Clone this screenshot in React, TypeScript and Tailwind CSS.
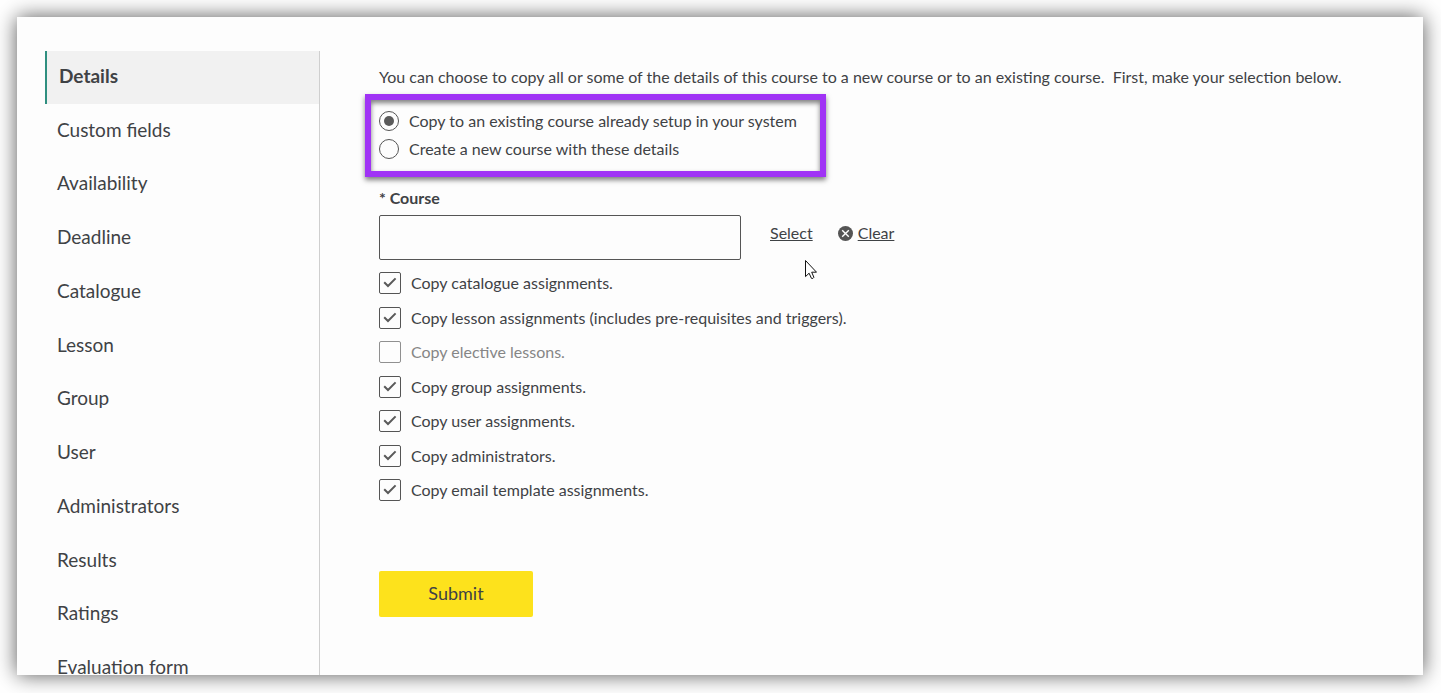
import { useState } from "react";

const MENU = [
    "Details",
    "Custom fields",
    "Availability",
    "Deadline",
    "Catalogue",
    "Lesson",
    "Group",
    "User",
    "Administrators",
    "Results",
    "Ratings",
    "Evaluation form",
];

const OPTIONS = [
    { id: "catalogue", label: "Copy catalogue assignments.", checked: true },
    { id: "lesson", label: "Copy lesson assignments (includes pre-requisites and triggers).", checked: true },
    { id: "elective", label: "Copy elective lessons.", checked: false, disabled: true },
    { id: "group", label: "Copy group assignments.", checked: true },
    { id: "user", label: "Copy user assignments.", checked: true },
    { id: "admins", label: "Copy administrators.", checked: true },
    { id: "email", label: "Copy email template assignments.", checked: true },
];

function SideMenu() {
    return (
        <nav className="w-[275px] shrink-0 border-r border-[#cfcfcf] text-[19px] leading-6">
            <ul className="flex h-[645px] flex-col">
                {MENU.map((item, i) => (
                    <li key={item} className="flex-1">
                        <a
                            href="#"
                            className={
                                i === 0
                                    ? "flex h-[53px] items-center border-l-2 border-[#2f8f80] bg-[#f1f1f1] pb-1 pl-3 font-bold"
                                    : "flex h-full items-center pb-1 pl-3"
                            }
                        >
                            {item}
                        </a>
                    </li>
                ))}
            </ul>
        </nav>
    );
}

function RadioRow({ value, label, target, onChange }: {
    value: string;
    label: string;
    target: string;
    onChange: (value: string) => void;
}) {
    return (
        <label className="flex h-7 items-center gap-[10px]">
            <span className="grid size-5 shrink-0 place-items-center">
                <input
                    type="radio"
                    name="target"
                    value={value}
                    checked={target === value}
                    onChange={() => onChange(value)}
                    className="peer col-start-1 row-start-1 size-5 appearance-none rounded-full border border-[#555]"
                />
                <span className="pointer-events-none col-start-1 row-start-1 hidden size-[10px] rounded-full bg-[#5a5a5a] peer-checked:block" />
            </span>
            {label}
        </label>
    );
}

function CheckRow({ id, label, checked, disabled }: {
    id: string;
    label: string;
    checked: boolean;
    disabled?: boolean;
}) {
    return (
        <label className={disabled ? "flex h-[22px] items-center gap-[10px] text-[#868686]" : "flex h-[22px] items-center gap-[10px]"}>
            <span className="grid size-[22px] shrink-0 place-items-center">
                <input
                    type="checkbox"
                    name={id}
                    defaultChecked={checked}
                    disabled={disabled}
                    className="peer col-start-1 row-start-1 size-[22px] appearance-none rounded-[2px] border border-[#555] disabled:border-[#909090]"
                />
                <svg
                    viewBox="0 0 22 22"
                    className="pointer-events-none col-start-1 row-start-1 hidden size-[22px] fill-none stroke-[#5a5a5a] stroke-2 peer-checked:block"
                >
                    <path d="M5.2 10.2 9 14l7.6-7.6" />
                </svg>
            </span>
            {label}
        </label>
    );
}

export default function App() {
    const [target, setTarget] = useState("existing");

    return (
        <div className="h-screen overflow-hidden bg-white pt-[17px] pr-[18px] pb-[18px] pl-[17px] font-['Lato',sans-serif] text-base leading-6 text-[#3f4245]">
            <div className="flex h-full bg-[#fdfdfd] pl-7 shadow-[0_0_20px_rgba(0,0,0,0.66)]">
                <div className="flex min-w-0 flex-1 overflow-hidden pt-[34px]">
                    <SideMenu />

                    <form className="min-w-0 flex-1 pt-[14px] pl-[59px]" onSubmit={(e) => e.preventDefault()}>
                        <p className="whitespace-pre-wrap">
                            {"You can choose to copy all or some of the details of this course to a new course or to an existing course.  First, make your selection below."}
                        </p>

                        <fieldset className="mt-[5px] -ml-[14px] w-[461px] border-6 border-[#a033f5] pt-[7px] pb-2 pl-2 shadow-[0_3px_5px_rgba(0,0,0,0.5),inset_0_3px_5px_rgba(0,0,0,0.5)]">
                            <RadioRow value="existing" label="Copy to an existing course already setup in your system" target={target} onChange={setTarget} />
                            <RadioRow value="new" label="Create a new course with these details" target={target} onChange={setTarget} />
                        </fieldset>

                        <label htmlFor="course" className="mt-[9px] block font-bold">* Course</label>
                        <div className="relative mt-[5px] flex items-start">
                            <input id="course" type="text" className="h-[45px] w-[362px] rounded-[2px] border border-[#555] px-3" />
                            <a href="#" className="mt-[6px] ml-[29px] underline">Select</a>
                            <a href="#" className="mt-[6px] ml-[25px] flex items-center gap-[5px]">
                                <svg viewBox="0 0 15 15" className="size-[15px]">
                                    <circle cx="7.5" cy="7.5" r="7.5" fill="#555" />
                                    <path d="m4.2 4.2 6.6 6.6m0-6.6-6.6 6.6" stroke="#fff" strokeWidth="1.4" />
                                </svg>
                                <span className="underline">Clear</span>
                            </a>
                            {/* mouse pointer */}
                            <svg viewBox="0 0 12 20" className="absolute top-[45px] left-[426px] h-5 w-3">
                                <path d="M.5.5v16.1l3.6-3.4 2.3 5.1q1.6.8 2.5-1L6.7 12.2h4.8z" fill="#fff" stroke="#111" />
                            </svg>
                        </div>

                        <div className="mt-3 flex h-[229px] flex-col justify-between">
                            {OPTIONS.map((option) => (
                                <CheckRow key={option.id} {...option} />
                            ))}
                        </div>

                        <button type="submit" className="mt-[70px] h-[46px] w-[154px] rounded-[2px] bg-[#fde21c] pb-[2px] text-lg">
                            Submit
                        </button>
                    </form>
                </div>
            </div>
        </div>
    );
}
